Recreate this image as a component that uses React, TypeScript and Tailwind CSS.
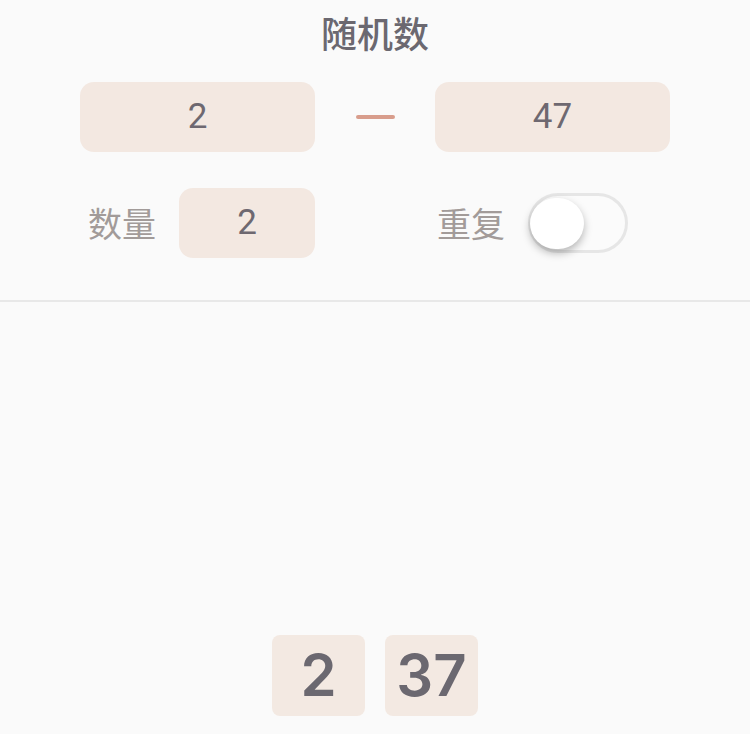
import React, { useState } from "react";

const font = { fontFamily: '"Noto Sans CJK SC", "Noto Sans", sans-serif' };

function NumBox({ value, className }: { value: string; className?: string }) {
  return (
    <div
      className={
        "h-[70px] rounded-[14px] bg-[#f3e8e1] flex items-center justify-center text-[35px] text-[#6e6870] " +
        (className || "")
      }
      style={{ fontFamily: '"Roboto", "Noto Sans", sans-serif' }}
    >
      {value}
    </div>
  );
}

export default function App() {
  const [repeat, setRepeat] = useState(false);
  const results = ["2", "37"];

  return (
    <div className="w-[750px] h-[734px] bg-[#fafafa] flex flex-col overflow-hidden" style={font}>
      <div className="h-[300px] flex flex-col items-center">
        <div className="mt-[8px] h-[48px] text-[36px] font-medium leading-[48px] text-[#6b6870]">随机数</div>

        <div className="mt-[26px] w-full flex items-center px-[80px]">
          <NumBox value="2" className="w-[235px]" />
          <div className="flex-1 flex justify-center">
            <div className="w-[39px] h-[4px] rounded-full bg-[#d89d8c]" />
          </div>
          <NumBox value="47" className="w-[235px]" />
        </div>

        <div className="mt-[36px] w-full flex items-center pl-[88px]">
          <span className="text-[34px] text-[#a29b99] leading-none">数量</span>
          <NumBox value="2" className="ml-[23px] w-[136px]" />
          <span className="ml-[122px] text-[34px] text-[#a29b99] leading-none">重复</span>
          <button
            onClick={() => setRepeat((r) => !r)}
            className={
              "relative ml-[23px] w-[100px] h-[60px] rounded-full border-[3px] border-[#e6e6e6] " +
              (repeat ? "bg-[#d89d8c]" : "bg-[#fbfbfb]")
            }
          >
            <span
              className={
                "absolute top-[2px] h-[51px] w-[54px] rounded-full bg-white shadow-[0_4px_8px_rgba(0,0,0,0.28)] " +
                (repeat ? "left-[40px]" : "left-[-1px]")
              }
            />
          </button>
        </div>
      </div>

      <div className="h-[2px] bg-[#e8e8e8]" />

      <div className="flex-1 flex items-end justify-center gap-[20px] pb-[18px]">
        {results.map((r, i) => (
          <div
            key={i}
            className="w-[93px] h-[81px] rounded-[8px] bg-[#f3e9e2] flex items-center justify-center text-[58px] font-semibold text-[#6b6870]"
            style={{ fontFamily: '"Inter", "Noto Sans", sans-serif' }}
          >
            {r}
          </div>
        ))}
      </div>
    </div>
  );
}
